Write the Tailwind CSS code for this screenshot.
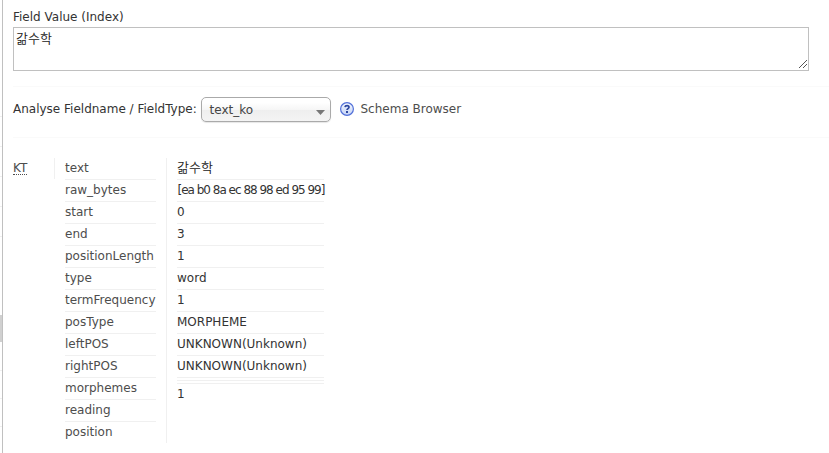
<!DOCTYPE html>
<html lang="en"><head><meta charset="utf-8"><title>Analysis</title>
<script src="https://cdn.jsdelivr.net/npm/@tailwindcss/browser@4"></script></head>
<body class="bg-white">
<div class="flex h-[453px] w-[829px] overflow-hidden bg-white font-['DejaVu_Sans','Noto_Sans_CJK_KR',sans-serif] text-[12px] leading-[21px] text-[#333]">
  <aside class="flex w-[3px] shrink-0 flex-col border-r border-[#c0c0c0]">
    <div class="h-[117px] border-b border-[#f0f0f0]"></div>
    <div class="h-[30px] border-b border-[#f0f0f0]"></div>
    <div class="h-[30px] border-b border-[#f0f0f0]"></div>
    <div class="h-[30px] border-b border-[#f0f0f0]"></div>
    <div class="h-[30px] border-b border-[#f0f0f0]"></div>
    <div class="h-[78px]"></div>
    <div class="h-[27px] bg-[#d0d0d0]"></div>
    <div class="h-[29px] border-b border-[#f0f0f0]"></div>
    <div class="h-[28px] border-b border-[#f0f0f0]"></div>
    <div class="h-[28px] border-b border-[#f0f0f0]"></div>
  </aside>
  <main class="w-[826px] pl-[10px]">
    <div class="h-[87px] border-b border-[#fafafa] pt-[7px]">
      <label class="block h-[20px]">Field Value (Index)</label>
      <div class="flex h-[44px] w-[796px] justify-between border border-[#c0c0c0] pl-[2px]">
        <span class="text-[13px] font-[350] text-[#222]">갊수학</span>
        <svg class="mr-[1px] mb-[1px] self-end" width="9" height="9" viewBox="0 0 9 9" shape-rendering="crispEdges" fill="none" stroke="#555"><path d="M0.5 8.5 8.5 .5M4.5 8.5 8.5 4.5"/></svg>
      </div>
    </div>
    <div class="flex h-[51px] border-b border-[#fafafa] pt-[10px]">
      <span class="mt-[2px] w-[188px] whitespace-nowrap">Analyse Fieldname / FieldType:</span>
      <div class="flex h-[25px] w-[130px] justify-between rounded-[5px] border border-[#aaa] bg-[linear-gradient(#fff_20%,#f6f6f6_50%,#eee_52%,#f4f4f4_100%)] pr-[5px] pl-[7.5px] leading-[24px] text-[#444] shadow-[0_1px_1px_rgba(0,0,0,0.1)]">
        <span>text_ko</span>
        <svg class="mt-[12px]" width="9" height="5" viewBox="0 0 9 5"><path d="M0 0h9L4.500 5z" fill="#777"/></svg>
      </div>
      <a class="flex pl-[9px] text-[#4d4d4d]">
        <svg class="mt-[5px] mr-[6.5px] h-[14px] w-[14px]" viewBox="0 0 14 14"><defs><linearGradient id="help" x2="0" y2="1"><stop stop-color="#f5f8ff"/><stop offset="1" stop-color="#c3d2f5"/></linearGradient></defs><circle cx="7" cy="7" r="6.400" fill="url(#help)" stroke="#5270d8" stroke-width="1.200"/><path d="M5 5.200C5.200 3.300 9 3.100 9 5.200 9 6.600 7.100 6.600 7 8" fill="none" stroke="#2d479f" stroke-width="1.700"/><path d="M6 9h2v2H6z" fill="#2d479f"/></svg>
        <span class="mt-[2px]">Schema Browser</span>
      </a>
    </div>
    <div class="flex pt-[20px]">
      <div class="h-[21px] w-[42px] border-r border-[#f0f0f0]"><abbr class="mt-[4px] block w-[14px] border-b border-dotted border-[#4d4d4d] leading-[12px] text-[#4d4d4d]">KT</abbr></div>
      <div class="flex h-[285px] w-[112px] flex-col border-r border-[#f0f0f0] pr-[10px] pl-[10px] text-[#4d4d4d] *:h-[22px] *:border-b *:border-[#f0f0f0] *:last:border-0">
        <div>text</div><div>raw_bytes</div><div>start</div><div>end</div><div>positionLength</div><div>type</div><div>termFrequency</div><div>posType</div><div>leftPOS</div><div>rightPOS</div><div>morphemes</div><div>reading</div><div>position</div>
      </div>
      <div class="ml-[10px] flex w-[147px] flex-col whitespace-nowrap">
        <div class="h-[22px] border-b border-[#f0f0f0] text-[13px] leading-[19px] font-[350] text-[#222]">갊수학</div>
        <div class="h-[22px] border-b border-[#f0f0f0] pl-[0.5px] tracking-[-1px]">[ea b0 8a ec 88 98 ed 95 99]</div>
        <div class="h-[22px] border-b border-[#f0f0f0]">0</div>
        <div class="h-[22px] border-b border-[#f0f0f0]">3</div>
        <div class="h-[22px] border-b border-[#f0f0f0]">1</div>
        <div class="h-[22px] border-b border-[#f0f0f0]">word</div>
        <div class="h-[22px] border-b border-[#f0f0f0]">1</div>
        <div class="h-[22px] border-b border-[#f0f0f0]">MORPHEME</div>
        <div class="h-[22px] border-b border-[#f0f0f0]">UNKNOWN(Unknown)</div>
        <div class="h-[22px] border-b border-[#f0f0f0]">UNKNOWN(Unknown)</div>
        <div class="h-[3px] border-b border-[#f0f0f0]"></div>
        <div class="h-[3px] border-b border-[#f0f0f0]"></div>
        <div class="h-[22px]">1</div>
      </div>
    </div>
  </main>
</div>
</body></html>
